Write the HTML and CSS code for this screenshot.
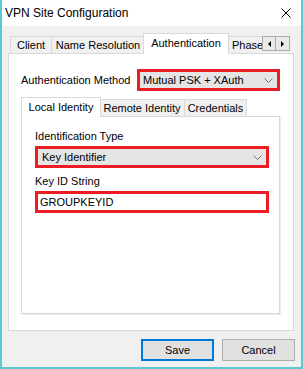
FILE: index.html
```html
<!DOCTYPE html>
<html>
<head>
<link rel="stylesheet" href="styles.css">
</head>
<body>
    <div class="window">
        <div class="titlebar">
            <span class="title">VPN Site Configuration</span>
            <svg class="close" width="10" height="10" viewBox="0 0 10 10">
                <path d="M0.5 0.5 L9.5 9.5 M9.5 0.5 L0.5 9.5" stroke="#000" stroke-width="1" fill="none"/>
            </svg>
        </div>
        <div class="dialog">
            <div class="tabrow">
                <div class="strip">
                    <div class="tab w-client">Client</div>
                    <div class="tab w-name">Name Resolution</div>
                    <div class="tab active w-auth">Authentication</div>
                    <div class="tab w-phase">Phase</div>
                </div>
                <div class="scroller">
                    <div class="arrow-btn"><span class="tri tri-left"></span></div>
                    <div class="arrow-btn"><span class="tri tri-right"></span></div>
                </div>
            </div>
            <div class="panel">
                <div class="method-row">
                    <span>Authentication Method</span>
                    <div class="select hl method">
                        <span>Mutual PSK + XAuth</span>
                        <svg class="chev" width="9" height="5" viewBox="0 0 9 5"><polyline points="0.5,0.5 4.5,4.5 8.5,0.5" stroke="#777" fill="none"/></svg>
                    </div>
                </div>
                <div class="tabrow inner">
                    <div class="tab active w-local">Local Identity</div>
                    <div class="tab w-remote">Remote Identity</div>
                    <div class="tab w-cred">Credentials</div>
                </div>
                <div class="inner-panel">
                    <div class="field-label">Identification Type</div>
                    <div class="select hl">
                        <span>Key Identifier</span>
                        <svg class="chev" width="9" height="5" viewBox="0 0 9 5"><polyline points="0.5,0.5 4.5,4.5 8.5,0.5" stroke="#777" fill="none"/></svg>
                    </div>
                    <div class="field-label second">Key ID String</div>
                    <div class="input hl">GROUPKEYID</div>
                </div>
            </div>
            <div class="buttons">
                <div class="btn default">Save</div>
                <div class="btn">Cancel</div>
            </div>
        </div>
    </div>
</body>
</html>
```

FILE: styles.css
```css
body {
    margin: 0;
    font-family: "Liberation Sans", Arial, sans-serif;
    font-size: 11px;
    color: #000;
}
.window {
    width: 303px;
    height: 369px;
    box-sizing: border-box;
    border: 2px solid #5bc9d1;
    border-top: 0;
    display: flex;
    flex-direction: column;
}
.titlebar {
    height: 26px;
    flex: none;
    background-color: #fff;
    display: flex;
    align-items: center;
    padding-left: 3px;
}
.title {
    font-size: 12px;
}
.close {
    margin-left: auto;
    margin-right: 10px;
}
.dialog {
    flex: 1;
    background-color: #f0f0f0;
    padding: 7px 6px 6px 6px;
}

/* tabs */
.tabrow {
    display: flex;
    height: 21px;
    margin-bottom: -1px;
    position: relative;
    z-index: 1;
}
.strip {
    display: flex;
    width: 252px;
    padding-left: 2px;
    overflow: hidden;
    flex: none;
}
.tab {
    flex: none;
    box-sizing: border-box;
    height: 17px;
    margin-top: 3px;
    border: 1px solid #d9d9d9;
    border-bottom: 0;
    background-color: #f0f0f0;
    text-align: center;
    line-height: 16px;
    white-space: nowrap;
    margin-left: -1px;
}
.tab:first-child {
    margin-left: 0;
}
.tab.active {
    height: 21px;
    margin-top: 0;
    background-color: #fff;
    position: relative;
    z-index: 1;
    margin-left: -2px;
    margin-right: -1px;
    line-height: 19px;
}
.w-client { width: 42px; }
.w-name { width: 94px; }
.w-auth { width: 86px; }
.w-phase { width: 40px; text-align: left; padding-left: 4px; }
.scroller {
    display: flex;
    margin-top: 3px;
    height: 15px;
}
.arrow-btn {
    width: 14px;
    height: 15px;
    box-sizing: border-box;
    border: 1px solid #adadad;
    background-color: #e8e8e8;
    display: flex;
    align-items: center;
    justify-content: center;
}
.arrow-btn + .arrow-btn {
    border-left: 0;
}
.tri {
    width: 0;
    height: 0;
    border-top: 3px solid transparent;
    border-bottom: 3px solid transparent;
}
.tri-left { border-right: 3px solid #000; }
.tri-right { border-left: 3px solid #000; }

/* panels */
.panel {
    height: 278px;
    box-sizing: border-box;
    margin-right: 1px;
    border: 1px solid #d9d9d9;
    background-color: #fff;
    padding: 15px 13px 0 12px;
}
.method-row {
    display: flex;
    align-items: center;
    justify-content: space-between;
}
.select {
    height: 22px;
    box-sizing: border-box;
    background-color: #e5e5e5;
    display: flex;
    align-items: center;
    justify-content: space-between;
    padding: 0 4px 0 4px;
}
.hl {
    border: 3px solid #ed1c24;
}
.method {
    width: 143px;
    padding-left: 3px;
}
.chev {
    margin-top: 1px;
}
.tabrow.inner {
    margin-top: 6px;
    height: 20px;
}
.tabrow.inner .tab {
    margin-top: 2px;
    height: 17px;
}
.tabrow.inner .tab.active {
    margin-top: 0;
    margin-left: 0;
    height: 20px;
    line-height: 18px;
}
.w-local { width: 80px; }
.w-remote { width: 86px; }
.w-cred { width: 63px; }
.inner-panel {
    height: 198px;
    box-sizing: border-box;
    border: 1px solid #d9d9d9;
    box-shadow: 1px 1px 0 #ececec;
    padding: 13px 10px 0 13px;
}
.field-label {
    line-height: 13px;
    margin-bottom: 3px;
}
.field-label.second {
    margin-top: 7px;
}
.input {
    height: 22px;
    box-sizing: border-box;
    background-color: #fff;
    padding-left: 2px;
    line-height: 16px;
}

/* buttons */
.buttons {
    display: flex;
    justify-content: flex-end;
    gap: 8px;
    margin-top: 8px;
}
.btn {
    width: 73px;
    height: 22px;
    box-sizing: border-box;
    border: 1px solid #adadad;
    background-color: #e1e1e1;
    text-align: center;
    line-height: 20px;
}
.btn.default {
    border: 2px solid #0078d7;
    line-height: 18px;
}
```
